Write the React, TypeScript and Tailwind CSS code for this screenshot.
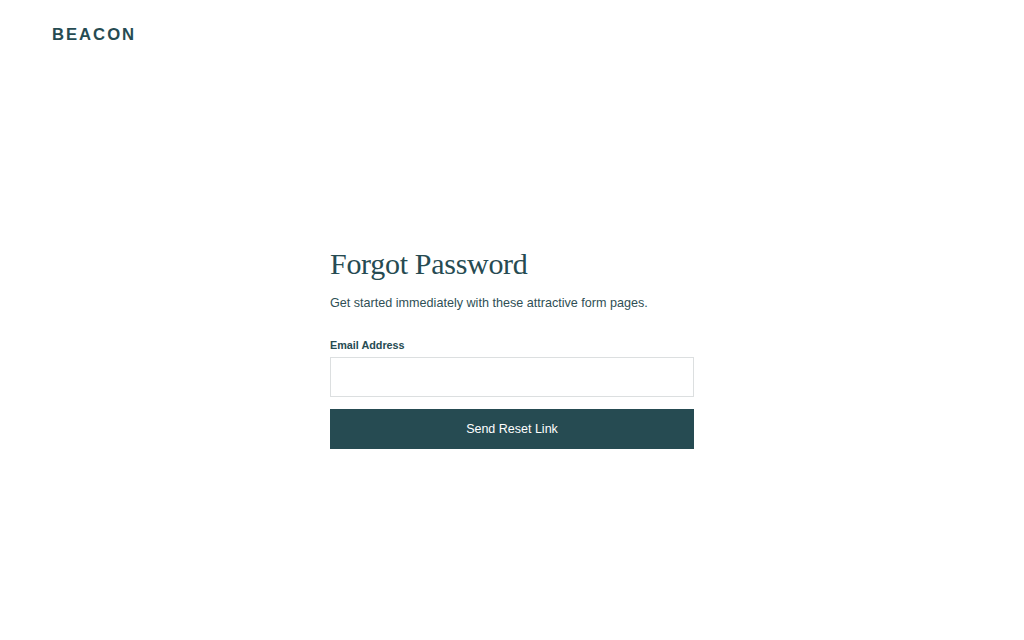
export default function App() {
  return (
    <div
      className="min-h-screen bg-white text-[#264b52]"
      style={{ fontFamily: '"Liberation Sans", Arial, sans-serif' }}
    >
      <header className="px-[52px] pt-[26px]">
        <div className="text-[16px] font-bold tracking-[0.12em] leading-[18px] scale-x-[1.04] origin-left">
          BEACON
        </div>
      </header>

      <main className="flex justify-center pt-[202px]">
        <form className="w-[364px]" onSubmit={(e) => e.preventDefault()}>
          <h1
            className="text-[30px] leading-[36px] tracking-[-0.01em]"
            style={{ fontFamily: '"Liberation Serif", "DejaVu Serif", serif' }}
          >
            Forgot Password
          </h1>
          <p className="mt-[12px] text-[12.6px] leading-[18px] text-[#2f4f55]">
            Get started immediately with these attractive form pages.
          </p>

          <label className="mt-[26px] block text-[10.8px] font-semibold leading-[14px]">
            Email Address
          </label>
          <input
            type="email"
            className="mt-[5px] block h-[40px] w-full border border-[#dcdfe0] px-3 text-[13px] outline-none"
          />
          <button
            type="submit"
            className="mt-[12px] flex h-[40px] w-full items-center justify-center bg-[#264b52] text-[12.5px] font-medium text-white"
          >
            Send Reset Link
          </button>
        </form>
      </main>
    </div>
  );
}
